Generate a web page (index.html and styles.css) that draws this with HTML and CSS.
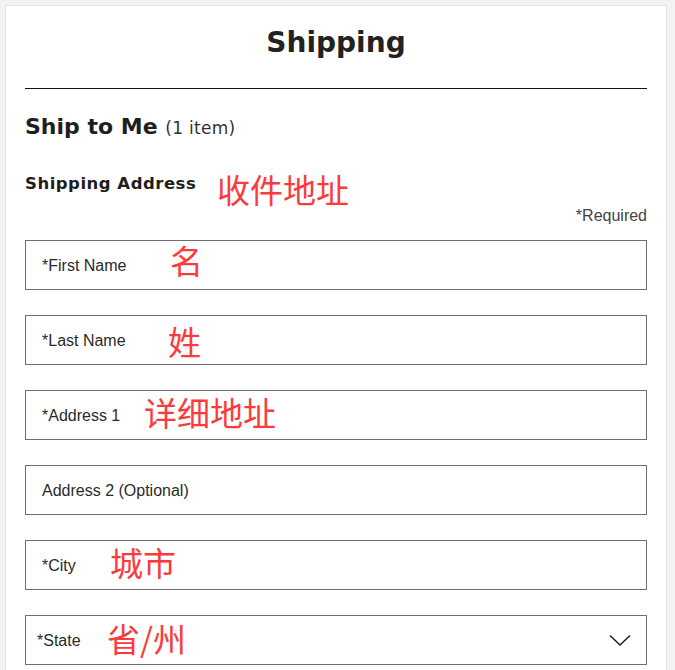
FILE: index.html
```html
<!DOCTYPE html>
<html>
<head>
  <title>Shipping</title>
  <link rel="stylesheet" href="styles.css">
</head>
<body>
  <div class="card">
    <h1 class="title">Shipping</h1>
    <hr class="rule">

    <h2 class="ship-to">Ship to Me <span class="count">(1 item)</span></h2>

    <div class="section-head">
      <h3>Shipping Address</h3>
      <span class="note note-head">收件地址</span>
    </div>
    <div class="required">*Required</div>

    <!-- address fields -->
    <div class="fields">
      <div class="field">
        <label>*First Name</label>
        <span class="note note-first">名</span>
      </div>
      <div class="field">
        <label>*Last Name</label>
        <span class="note note-last">姓</span>
      </div>
      <div class="field">
        <label>*Address 1</label>
        <span class="note note-addr">详细地址</span>
      </div>
      <div class="field">
        <label>Address 2 (Optional)</label>
      </div>
      <div class="field">
        <label>*City</label>
        <span class="note note-city">城市</span>
      </div>
      <div class="field select">
        <label>*State</label>
        <span class="note note-state">省/州</span>
        <svg class="chevron" width="22" height="13" viewBox="0 0 22 13">
          <path d="M1 1.5 L11 11 L21 1.5" fill="none" stroke="#222" stroke-width="1.6"/>
        </svg>
      </div>
    </div>
  </div>
</body>
</html>
```

FILE: styles.css
```css
body {
  margin: 0;
  background: #f2f3f5;
  font-family: 'Liberation Sans', Arial, sans-serif;
  color: #222;
}

.card {
  margin: 5px 8px 0 5px;
  background: white;
  border: 1px solid #e4e5e7;
  border-bottom: none;
  padding: 20px 19px 20px 19px;
}

.title {
  margin: 0;
  font-family: 'DejaVu Sans', sans-serif;
  font-size: 28px;
  line-height: 34px;
  font-weight: bold;
  text-align: center;
  color: #222;
}

.rule {
  margin: 28px 0 0 0;
  border: none;
  border-top: 1px solid #111;
}

.ship-to {
  margin: 24px 0 0 0;
  font-family: 'DejaVu Sans', sans-serif;
  font-size: 22px;
  line-height: 28px;
  font-weight: bold;
  color: #1e1e1e;
}

.ship-to .count {
  font-size: 17px;
  font-weight: normal;
  letter-spacing: 0.3px;
  color: #333;
}

.section-head {
  position: relative;
  margin-top: 32px;
}

.section-head h3 {
  margin: 0;
  font-family: 'DejaVu Sans', sans-serif;
  font-size: 16.5px;
  line-height: 20px;
  font-weight: bold;
  letter-spacing: 0.5px;
  color: #1e1e1e;
}

.required {
  margin-top: 12px;
  text-align: right;
  font-size: 16px;
  line-height: 20px;
  color: #444;
}

.fields {
  display: flex;
  flex-direction: column;
  gap: 25px;
  margin-top: 14px;
}

.field {
  position: relative;
  height: 48px;
  border: 1px solid #6f6f6f;
  display: flex;
  align-items: center;
  padding: 0 15px 0 16px;
}

.field label {
  margin-top: 2px;
  font-size: 16px;
  color: #2a2a2a;
}

.field.select {
  padding-left: 11px;
}

.chevron {
  margin-left: auto;
  margin-top: 1px;
}

.note {
  position: absolute;
  font-family: "Noto Sans CJK SC", sans-serif;
  font-size: 33px;
  line-height: 33px;
  color: #fb3b3b;
  white-space: nowrap;
  top: 50%;
  margin-top: -19px;
}

.note-head { left: 192px; top: 0; margin-top: -1px; }
.note-first { left: 144px; margin-top: -21px; }
.note-last { left: 142px; margin-top: -15px; }
.note-addr { left: 118px; }
.note-city { left: 84px; }
.note-state { left: 81px; margin-top: -18px; }
```
